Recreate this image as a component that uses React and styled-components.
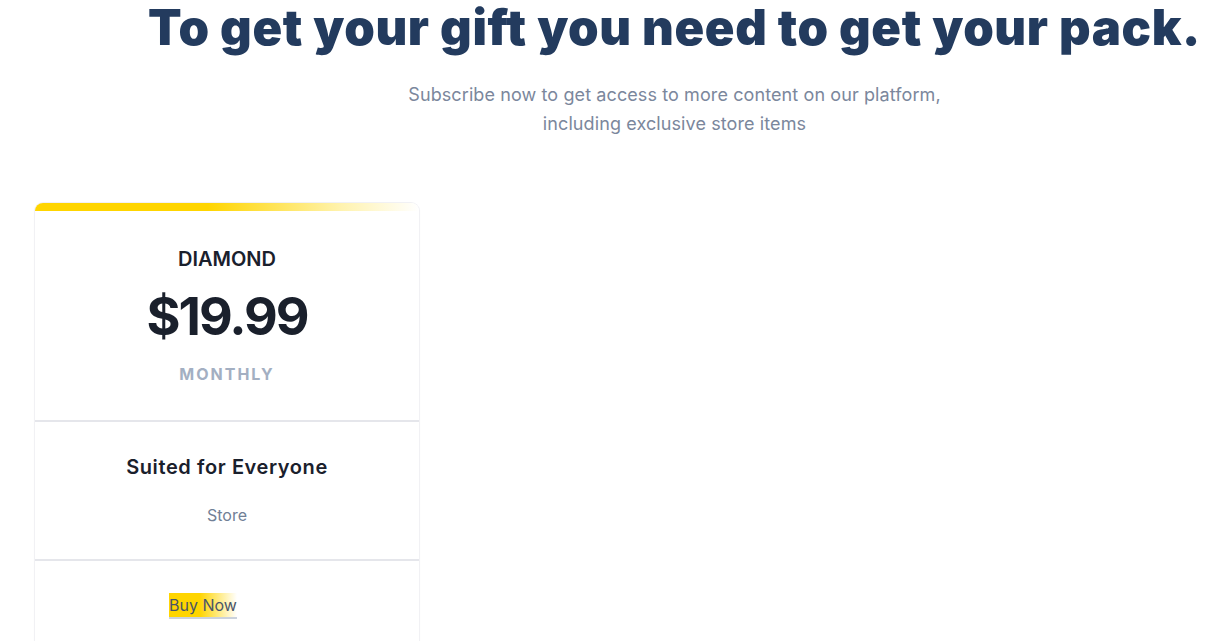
import React from 'react'
import styled, { createGlobalStyle } from 'styled-components'

const Global = createGlobalStyle`
  body {
    margin: 0;
    background: #fff;
    font-family: Inter, "Noto Sans", sans-serif;
  }
`

const Page = styled.div`
  display: flex;
  flex-direction: column;
`

const Header = styled.header`
  padding-left: 120px;
  text-align: center;
`

const Title = styled.h1`
  margin: 3px 0 0;
  font-size: 49px;
  line-height: 1;
  font-weight: 900;
  letter-spacing: 0.6px;
  color: #233b5e;
`

const Subtitle = styled.p`
  margin: 28px 0 0;
  font-size: 18px;
  line-height: 29px;
  letter-spacing: 0.1px;
  color: #7b879c;
`

const Plans = styled.section`
  display: flex;
  padding: 65px 0 0 35px;
`

const Card = styled.div`
  width: 384px;
  background: #fff;
  border-radius: 8px;
  box-shadow: 0 0 0 1px #f1f1f4, 0 1px 3px rgba(0, 0, 0, 0.04);
  overflow: hidden;
`

const TopBar = styled.div`
  height: 8px;
  background: linear-gradient(90deg, #ffd500 0%, #ffd500 45%, #fff3b0 80%, #ffffff 100%);
`

const Section = styled.div`
  display: flex;
  flex-direction: column;
  align-items: ${p => (p.$left ? 'flex-start' : 'center')};
  padding: ${p => p.$pad};
  border-top: ${p => (p.$divider ? '2px solid #e5e6eb' : 'none')};
`

const PlanName = styled.h3`
  margin: 0;
  font-size: 20px;
  line-height: 30px;
  font-weight: 600;
  color: #1a202c;
  letter-spacing: ${p => (p.$wide ? '0.6px' : '0')};
`

const Price = styled.div`
  margin-top: 12px;
  font-size: 52px;
  line-height: 62px;
  font-weight: 700;
  letter-spacing: -2px;
  color: #1a202c;
`

const Period = styled.div`
  margin-top: 14px;
  font-size: 16px;
  line-height: 24px;
  font-weight: 700;
  letter-spacing: 2px;
  color: #a3afc2;
`

const Feature = styled.div`
  margin-top: 21px;
  font-size: 16px;
  line-height: 24px;
  color: #718096;
`

const BuyButton = styled.a`
  margin-left: 134px;
  font-size: 16px;
  line-height: 24px;
  color: #4a5568;
  background: linear-gradient(90deg, #ffd500 0%, #ffd500 45%, #ffffff 100%);
  border-bottom: 2px solid #cbd2dc;
  cursor: pointer;
`

export default function App() {
  return (
    <Page>
      <Global />
      <Header>
        <Title>To get your gift you need to get your pack.</Title>
        <Subtitle>
          Subscribe now to get access to more content on our platform,
          <br />
          including exclusive store items
        </Subtitle>
      </Header>
      <Plans>
        <Card>
          <TopBar />
          <Section $pad="33px 0 34px">
            <PlanName>DIAMOND</PlanName>
            <Price>$19.99</Price>
            <Period>MONTHLY</Period>
          </Section>
          <Section $divider $pad="30px 0 32px">
            <PlanName $wide>Suited for Everyone</PlanName>
            <Feature>Store</Feature>
          </Section>
          <Section $divider $left $pad="32px 0 40px">
            <BuyButton>Buy Now</BuyButton>
          </Section>
        </Card>
      </Plans>
    </Page>
  )
}
